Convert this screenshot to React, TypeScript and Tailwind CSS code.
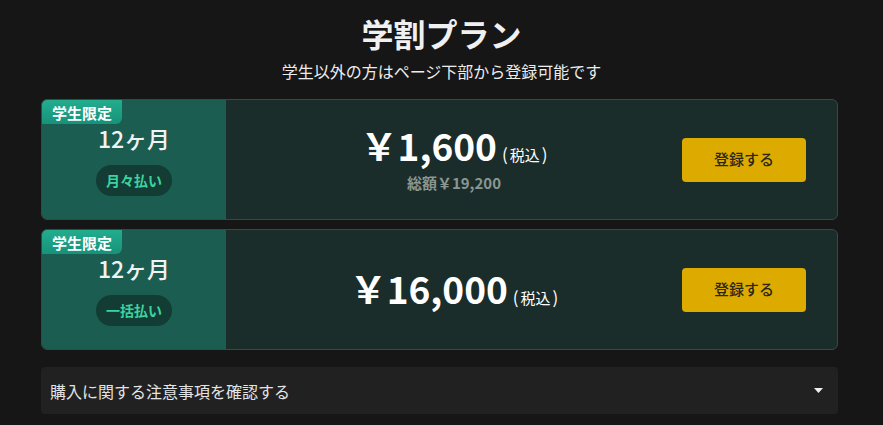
const font = { fontFamily: '"Noto Sans CJK JP", "Noto Sans", sans-serif' };

type Plan = {
  months: string;
  payment: string;
  price: string;
  total?: string;
};

const plans: Plan[] = [
  { months: "12ヶ月", payment: "月々払い", price: "￥1,600", total: "総額￥19,200" },
  { months: "12ヶ月", payment: "一括払い", price: "￥16,000" },
];

function PlanCard({ plan }: { plan: Plan }) {
  return (
    <section className="relative flex h-[121px] overflow-hidden rounded-md border border-[#3a4744] bg-[#1a2d2a]">
      <span className="absolute left-0 top-0 flex h-[24px] w-[80px] items-center justify-center rounded-br-md bg-gradient-to-b from-[#22ad8d] to-[#17927a] text-[15px] font-bold leading-none text-white">
        学生限定
      </span>
      <div className="flex w-[184px] shrink-0 flex-col items-center justify-center bg-[#1b5d50] pt-[4px]">
        <h3 className="text-[23px] font-medium leading-none text-[#f2f2f2]">{plan.months}</h3>
        <span className="mt-[15px] flex h-[31px] w-[76px] items-center justify-center rounded-full bg-[#133c34] text-[14px] font-bold text-[#3bd3a0]">
          {plan.payment}
        </span>
      </div>
      <div className="flex flex-1 items-center">
        <div className="flex flex-1 flex-col items-center justify-center pb-[2px]">
          <p className="flex items-baseline whitespace-nowrap leading-none text-white">
            <span className="text-[37px] font-semibold leading-none">{plan.price}</span>
            <span className="ml-[5px] whitespace-nowrap text-[15px] leading-none">
              <span className="mr-[2px] text-[17px]">(</span>税込<span className="ml-[2px] text-[17px]">)</span>
            </span>
          </p>
          {plan.total && (
            <p className="mt-[11px] text-[15px] font-bold leading-none text-[#8a9692]">{plan.total}</p>
          )}
        </div>
        <button className="mr-[31px] flex h-[44px] w-[124px] items-center justify-center rounded bg-[#ddab00] text-[15px] font-medium text-[#2b2616]">
          登録する
        </button>
      </div>
    </section>
  );
}

export default function App() {
  return (
    <div className="h-[425px] w-[883px] overflow-hidden bg-[#161616]" style={font}>
      <div className="flex flex-col items-center pt-[13px]">
        <h1 className="text-[32px] font-bold leading-[40px] text-[#f0f0f0]">学割プラン</h1>
        <p className="mt-[8px] text-[16px] leading-[20px] text-[#ececec]">
          学生以外の方はページ下部から登録可能です
        </p>
      </div>
      <div className="ml-[41px] mt-[18px] flex w-[797px] flex-col gap-[9px]">
        {plans.map((p) => (
          <PlanCard key={p.payment} plan={p} />
        ))}
        <div className="mt-[8px] flex h-[47px] items-center justify-between rounded bg-[#212121] pl-[9px] pr-[15px]">
          <span className="text-[16px] text-[#e4e4e4]">購入に関する注意事項を確認する</span>
          <svg width="9" height="5" viewBox="0 0 9 5">
            <path d="M0 0 L9 0 L4.5 5 Z" fill="#f0f0f0" />
          </svg>
        </div>
      </div>
    </div>
  );
}
